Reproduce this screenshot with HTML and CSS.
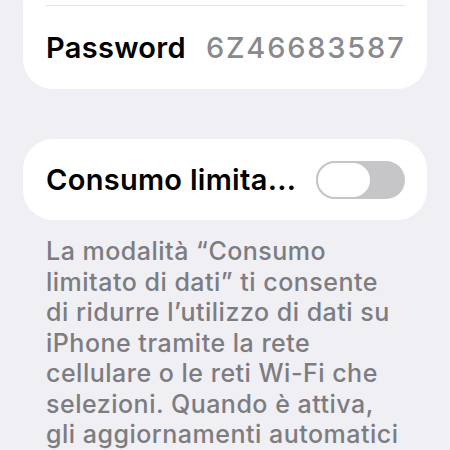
FILE: index.html
```html
<!DOCTYPE html>
<html lang="it">
<head>
<meta charset="utf-8">
<link rel="stylesheet" href="styles.css">
</head>
<body>
<div class="page">
  <div class="card card-top">
    <div class="row row-sep">
      <span class="label">Password</span>
      <span class="value">6Z46683587</span>
    </div>
  </div>
  <div class="card card-toggle">
    <div class="row">
      <span class="label">Consumo limita...</span>
      <span class="switch"><span class="knob"></span></span>
    </div>
  </div>
  <p class="note">La modalità “Consumo<br>limitato di dati” ti consente<br>di ridurre l’utilizzo di dati su<br>iPhone tramite la rete<br>cellulare o le reti Wi-Fi che<br>selezioni. Quando è attiva,<br>gli aggiornamenti automatici</p>
</div>
</body>
</html>
```
FILE: styles.css
```css
html, body {
  margin: 0;
  padding: 0;
  background: #efeff4;
  font-family: Inter, "Noto Sans", sans-serif;
  overflow: hidden;
}
.page {
  width: 450px;
  height: 450px;
  display: flex;
  flex-direction: column;
  padding: 0 23px;
  box-sizing: border-box;
}
.card {
  background: #ffffff;
  border-radius: 30px;
}
.card-top {
  margin-top: -25px;
  padding-top: 30px;
}
.row {
  display: flex;
  align-items: center;
  justify-content: space-between;
  margin: 0 22px 0 23px;
}
.row-sep {
  border-top: 1.5px solid #e3e3e7;
  height: 84px;
  box-sizing: border-box;
}
.card-toggle {
  margin-top: 50px;
  height: 81px;
  display: flex;
  flex-direction: column;
  justify-content: center;
}
.card-toggle .row {
  height: 81px;
}
.label {
  font-size: 29px;
  font-weight: 600;
  color: #000;
  letter-spacing: 0.3px;
}
.value {
  font-size: 29px;
  font-weight: 500;
  color: #8a8a8e;
  letter-spacing: 1.8px;
  margin-right: -0.5px;
}
.switch {
  width: 89px;
  height: 38px;
  border-radius: 19px;
  background: #c6c6c8;
  display: flex;
  align-items: center;
  box-sizing: border-box;
}
.knob {
  width: 56px;
  height: 38px;
  border-radius: 19px;
  background: #fff;
  border: 2px solid #c6c6c8;
  box-sizing: border-box;
}
.note {
  margin: 16px 0 0 23px;
  font-size: 25px;
  line-height: 30.5px;
  font-weight: 500;
  color: #7c7c81;
  letter-spacing: 0.5px;
  white-space: nowrap;
}
```
